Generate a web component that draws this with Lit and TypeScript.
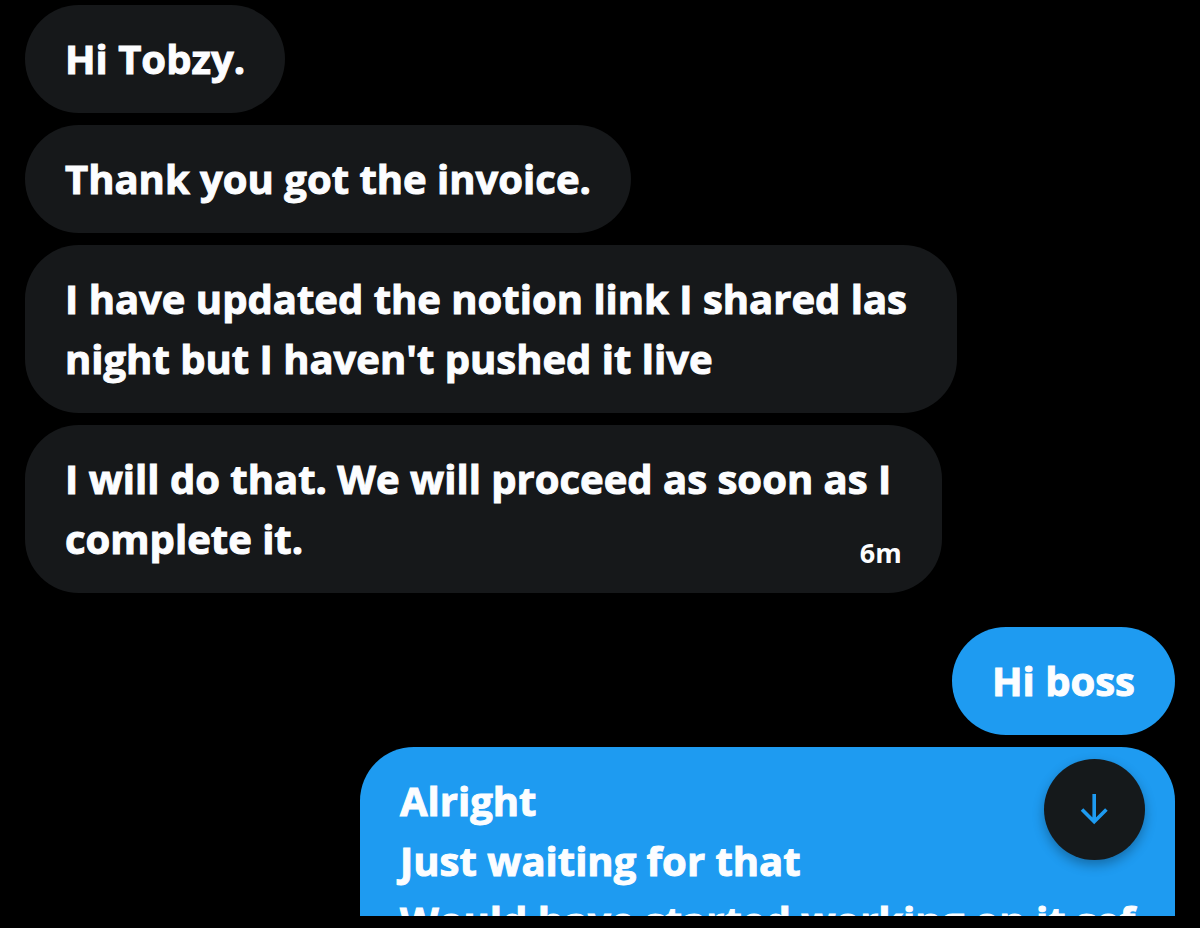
import { LitElement, html, css, nothing } from "lit";
import { customElement, property } from "lit/decorators.js";
import { classMap } from "lit/directives/class-map.js";

interface Message {
  lines: string[];
  time?: string;
}

interface Group {
  own: boolean;
  messages: Message[];
}

const groups: Group[] = [
  {
    own: false,
    messages: [
      { lines: ["Hi Tobzy."] },
      { lines: ["Thank you got the invoice."] },
      {
        lines: [
          "I have updated the notion link I shared las ",
          "night but I haven't pushed it live",
        ],
      },
      {
        lines: ["I will do that. We will proceed as soon as I ", "complete it."],
        time: "6m",
      },
    ],
  },
  {
    own: true,
    messages: [
      { lines: ["Hi boss"] },
      {
        lines: [
          "Alright",
          "Just waiting for that",
          "Would have started working on it sef",
        ],
      },
    ],
  },
];

@customElement("chat-bubble")
export class ChatBubble extends LitElement {
  static styles = css`
    :host {
      display: block;
      max-width: 100%;
    }
    .bubble {
      display: grid;
      box-sizing: border-box;
      padding: 24px 40px;
      border-radius: 54px;
      background: #16181a;
      color: #fcfdff;
    }
    .own {
      background: #1e9bf1;
    }
    .text,
    .time {
      grid-area: 1 / 1;
      margin: 0;
      font-weight: 700;
    }
    .text {
      font-size: 40px;
      line-height: 60px;
      white-space: pre-wrap;
      -webkit-text-stroke: 1px currentColor;
    }
    .time {
      align-self: end;
      justify-self: end;
      font-size: 27px;
      line-height: 32px;
    }
  `;

  @property({ attribute: false }) message!: Message;
  @property({ type: Boolean }) own = false;

  render() {
    const { lines, time } = this.message;
    return html`
      <div class=${classMap({ bubble: true, own: this.own })}>
        <p class="text">${lines.join("\n")}</p>
        ${time ? html`<time class="time">${time}</time>` : nothing}
      </div>
    `;
  }
}

@customElement("app-root")
export class AppRoot extends LitElement {
  static styles = css`
    :host {
      display: flex;
      flex-direction: column;
      box-sizing: border-box;
      height: 100vh;
      padding-bottom: 12px;
      background: #000;
      font-family: "Open Sans", "Noto Sans", sans-serif;
    }
    .thread {
      position: relative;
      flex: 1;
      min-height: 0;
      overflow: hidden;
    }
    .messages {
      display: flex;
      flex-direction: column;
      gap: 34px;
      padding: 5px 25px;
    }
    .group {
      display: flex;
      flex-direction: column;
      align-items: flex-start;
      gap: 12px;
    }
    .group.own {
      align-items: flex-end;
    }
    .jump {
      position: absolute;
      right: 55px;
      bottom: 56px;
      display: grid;
      place-items: center;
      width: 101px;
      height: 101px;
      padding: 0;
      border: 0;
      border-radius: 50%;
      background: #15191b;
      color: #1e9bf1;
      box-shadow: 0 5px 12px rgba(0, 0, 0, 0.3);
      cursor: pointer;
    }
    .arrow {
      width: 41px;
      height: 41px;
    }
  `;

  render() {
    return html`
      <main class="thread">
        <div class="messages">
          ${groups.map(
            (group) => html`
              <section class=${classMap({ group: true, own: group.own })}>
                ${group.messages.map(
                  (message) => html`
                    <chat-bubble
                      .message=${message}
                      ?own=${group.own}
                    ></chat-bubble>
                  `,
                )}
              </section>
            `,
          )}
        </div>
        <button class="jump" type="button" aria-label="Jump to latest message">
          <svg
            class="arrow"
            viewBox="0 0 41 41"
            fill="none"
            stroke="currentColor"
            stroke-width="3.6"
            aria-hidden="true"
          >
            <path d="M20.2 5v28M8 20.6 20.2 32.8 32.4 20.6" />
          </svg>
        </button>
      </main>
    `;
  }
}
